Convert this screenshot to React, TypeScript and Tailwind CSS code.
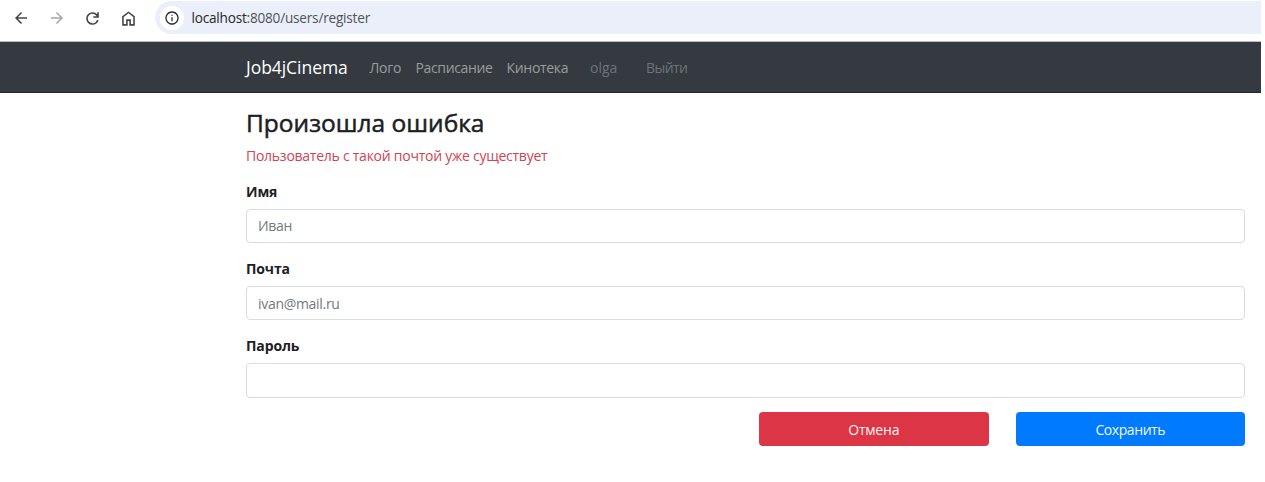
import React from "react";

function Icon({ d, className }: { d: string; className: string }) {
  return (
    <svg viewBox="0 0 24 24" fill="currentColor" className={"shrink-0 " + className}>
      <path d={d} />
    </svg>
  );
}

const BACK = "M7.83 13l5.6 5.6L12 20l-8-8 8-8 1.43 1.4L7.83 11H20v2z";
const FORWARD = "M16.17 13H4v-2h12.17l-5.6-5.6L12 4l8 8-8 8-1.43-1.4z";
const RELOAD =
  "M12 20q-3.35 0-5.675-2.325T4 12t2.325-5.675T12 4q1.725 0 3.3.713T18 6.75V4h2v7h-7V9h4.2q-.8-1.4-2.187-2.2T12 6Q9.5 6 7.75 7.75T6 12t1.75 4.25T12 18q1.925 0 3.475-1.1T17.65 14h2.1q-.7 2.65-2.85 4.325T12 20";
const HOME = "M6 19h3v-6h6v6h3v-9l-6-4.5L6 10v9zm-2 2V9l8-6 8 6v12h-7v-6h-2v6z";
const INFO =
  "M11 17h2v-6h-2zm1-8q.425 0 .713-.288T13 8t-.288-.712T12 7t-.712.288T11 8t.288.713T12 9m0 13q-2.075 0-3.9-.788t-3.175-2.137T2.788 15.9 2 12t.788-3.9 2.137-3.175T8.1 2.788 12 2t3.9.788 3.175 2.137T21.213 8.1 22 12t-.788 3.9-2.137 3.175-3.175 2.138T12 22m0-2q3.35 0 5.675-2.325T20 12t-2.325-5.675T12 4 6.325 6.325 4 12t2.325 5.675T12 20";

function Toolbar() {
  return (
    <div className="flex h-[41px] items-start pt-px">
      <div className="flex h-[34px] w-[155px] shrink-0 items-center pl-3 text-[#444648]">
        <Icon d={BACK} className="size-[18px]" />
        <Icon d={FORWARD} className="ml-[18px] size-[18px] text-[#a5a6a8]" />
        <Icon d={RELOAD} className="ml-[17px] size-[19px]" />
        <Icon d={HOME} className="ml-[17px] size-[19px]" />
      </div>
      <div className="flex h-[33px] grow items-center rounded-l-full bg-[#ebeff9] pl-[5px]">
        <div className="flex size-6 items-center justify-center rounded-full bg-white text-[#303234]">
          <Icon d={INFO} className="size-4" />
        </div>
        <div className="ml-[7.5px] text-[13.6px] leading-5 tracking-[-0.21px] whitespace-nowrap text-[#505357]">
          <span className="text-[#25282b]">localhost</span>:8080/users/register
        </div>
      </div>
    </div>
  );
}

function NavBar() {
  return (
    <nav className="flex h-[52px] items-center border-t border-b border-t-[#b9bcc0] border-b-[#24272a] bg-[#343a40] pt-px pl-[246px] text-[14px] whitespace-nowrap text-[#999c9f]">
      <div className="w-[123.5px] text-[17.5px] tracking-[-0.05px] text-white">Job4jCinema</div>
      <div className="w-[46px] tracking-[-0.3px]">Лого</div>
      <div className="w-[91px] tracking-[-0.35px]">Расписание</div>
      <div className="w-[83.5px] tracking-[-0.3px]">Кинотека</div>
      <div className="w-[56px] text-[#6c7379]">olga</div>
      <div className="tracking-[-0.55px] text-[#6c7379]">Выйти</div>
    </nav>
  );
}

function Field({ label, placeholder, type }: { label: string; placeholder?: string; type: string }) {
  return (
    <label className="block h-[77.3px]">
      <span className="block h-[27px] text-[14px] leading-[19px] font-bold tracking-[-0.12px] text-[#1c2023]">{label}</span>
      <input
        type={type}
        placeholder={placeholder}
        className="block h-[34.5px] w-full rounded-[4px] border border-[#dadde0] bg-white px-[11px] text-[14px] tracking-[-0.3px] text-[#495057] placeholder:text-[#727980]"
      />
    </label>
  );
}

export default function App() {
  return (
    <div className="h-[482px] w-full overflow-hidden bg-white pr-1 font-['Open_Sans','Noto_Sans',sans-serif]">
      <Toolbar />
      <NavBar />
      <main className="flex w-[1245px] flex-col pt-[14px] pl-[246px]">
        <h2 className="text-[24.5px] leading-[32px] font-medium text-[#1c2023] [-webkit-text-stroke:0.5px_#1c2023]">
          Произошла ошибка
        </h2>
        <p className="mt-[7px] text-[14px] leading-[19px] tracking-[-0.255px] text-[#ce4553]">
          Пользователь с такой почтой уже существует
        </p>
        <form className="mt-[16.6px]">
          <Field label="Имя" placeholder="Иван" type="text" />
          <Field label="Почта" placeholder="ivan@mail.ru" type="text" />
          <Field label="Пароль" type="password" />
          <div className="-mt-[1px] flex justify-end gap-[27px]">
            <button type="button" className="h-[33.5px] w-[229.5px] rounded-[4px] bg-[#dc3545] text-[14px] tracking-[-0.2px] text-[#fff4f5]">
              Отмена
            </button>
            <button type="button" className="h-[33.5px] w-[229.5px] rounded-[4px] bg-[#007bff] text-[14px] tracking-[-0.42px] text-[#f0f8ff]">
              Сохранить
            </button>
          </div>
        </form>
      </main>
    </div>
  );
}
